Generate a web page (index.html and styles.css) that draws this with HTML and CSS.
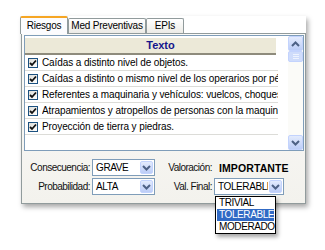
FILE: index.html
```html
<!DOCTYPE html>
<html>
<head>
<meta charset="utf-8">
<link rel="stylesheet" href="styles.css">
</head>
<body>
<div class="window">
  <div class="tabs">
    <div class="tab active">Riesgos</div>
    <div class="tab">Med Preventivas</div>
    <div class="tab">EPIs</div>
  </div>
  <div class="panel">
    <div class="list">
      <div class="grid">
        <div class="head">Texto</div>
        <div class="row"><span class="cb"><svg viewBox="0 0 8 8" width="8" height="8"><path d="M1 4 L3 6 L7 1.5" fill="none" stroke="#111" stroke-width="1.8"/></svg></span><span class="txt">Caídas a distinto nivel de objetos.</span></div>
        <div class="row"><span class="cb"><svg viewBox="0 0 8 8" width="8" height="8"><path d="M1 4 L3 6 L7 1.5" fill="none" stroke="#111" stroke-width="1.8"/></svg></span><span class="txt">Caídas a distinto o mismo nivel de los operarios por pérdida</span></div>
        <div class="row"><span class="cb"><svg viewBox="0 0 8 8" width="8" height="8"><path d="M1 4 L3 6 L7 1.5" fill="none" stroke="#111" stroke-width="1.8"/></svg></span><span class="txt">Referentes a maquinaria y vehículos: vuelcos, choques</span></div>
        <div class="row"><span class="cb"><svg viewBox="0 0 8 8" width="8" height="8"><path d="M1 4 L3 6 L7 1.5" fill="none" stroke="#111" stroke-width="1.8"/></svg></span><span class="txt">Atrapamientos y atropellos de personas con la maquinaria</span></div>
        <div class="row"><span class="cb"><svg viewBox="0 0 8 8" width="8" height="8"><path d="M1 4 L3 6 L7 1.5" fill="none" stroke="#111" stroke-width="1.8"/></svg></span><span class="txt">Proyección de tierra y piedras.</span></div>
      </div>
      <div class="sb">
        <div class="sbtn"><svg viewBox="0 0 9 6" width="9" height="6"><path d="M1 5 L4.5 1.5 L8 5" fill="none" stroke="#4d6185" stroke-width="2"/></svg></div>
        <div class="thumb"><i></i><i></i><i></i></div>
        <div class="track"></div>
        <div class="sbtn"><svg viewBox="0 0 9 6" width="9" height="6"><path d="M1 1 L4.5 4.5 L8 1" fill="none" stroke="#4d6185" stroke-width="2"/></svg></div>
      </div>
    </div>
    <div class="form">
      <span class="lbl">Consecuencia:</span>
      <div class="combo"><span class="cval">GRAVE</span><span class="arrow"><svg viewBox="0 0 9 6" width="9" height="6"><path d="M1 1 L4.5 4.5 L8 1" fill="none" stroke="#4d6185" stroke-width="2"/></svg></span></div>
      <span class="lbl">Valoración:</span>
      <span class="val">IMPORTANTE</span>
      <span class="lbl">Probabilidad:</span>
      <div class="combo"><span class="cval">ALTA</span><span class="arrow"><svg viewBox="0 0 9 6" width="9" height="6"><path d="M1 1 L4.5 4.5 L8 1" fill="none" stroke="#4d6185" stroke-width="2"/></svg></span></div>
      <span class="lbl">Val. Final:</span>
      <div class="combo final"><span class="cval">TOLERABLE</span><span class="arrow"><svg viewBox="0 0 9 6" width="9" height="6"><path d="M1 1 L4.5 4.5 L8 1" fill="none" stroke="#4d6185" stroke-width="2"/></svg></span>
        <div class="drop">
          <div class="opt">TRIVIAL</div>
          <div class="opt sel">TOLERABLE</div>
          <div class="opt">MODERADO</div>
        </div>
      </div>
    </div>
  </div>
</div>
</body>
</html>
```
FILE: styles.css
```css
html, body {
  margin: 0;
  padding: 0;
  background: #ffffff;
}
body {
  width: 325px;
  height: 250px;
  overflow: hidden;
  font-family: "Liberation Sans", Arial, sans-serif;
  font-size: 10px;
  color: #000;
}
.window {
  margin: 16px 0 0 21px;
  width: 285px;
  box-shadow: 2px 3px 5px rgba(0, 0, 0, 0.35);
}
.tabs {
  display: flex;
  align-items: flex-end;
  height: 17px;
  background: #fff;
}
.tab {
  box-sizing: border-box;
  height: 15px;
  border: 1px solid #919b9c;
  border-bottom: none;
  border-radius: 2px 2px 0 0;
  background: linear-gradient(#ffffff, #ecebe6);
  line-height: 13px;
  text-align: center;
  white-space: nowrap;
  letter-spacing: -0.2px;
}
.tab:nth-child(2) { width: 78px; }
.tab:nth-child(3) { width: 38px; }
.tab.active {
  position: relative;
  z-index: 1;
  width: 48px;
  height: 18px;
  margin-left: -1px;
  margin-bottom: -1px;
  border-top: 2px solid #f6a623;
  background: #fcfcfe;
  line-height: 15px;
}
.panel {
  box-sizing: border-box;
  height: 171px;
  border: 1px solid #919b9c;
  background: linear-gradient(#fbfbf9, #f3f2ed);
  padding: 1px 1px 0 2px;
}
.list {
  box-sizing: border-box;
  height: 116px;
  border: 1px solid #7f9db9;
  background: #fff;
  display: flex;
}
.grid {
  width: 253px;
  overflow: hidden;
}
.head {
  box-sizing: border-box;
  height: 17px;
  margin: 2px 2px 0 0;
  background: #ece9d8;
  border-bottom: 2px solid #8e8b7c;
  color: #14148c;
  font-weight: bold;
  font-size: 11px;
  line-height: 15px;
  text-align: center;
  padding-left: 20px;
}
.row {
  box-sizing: border-box;
  height: 16px;
  border-bottom: 1px solid #dcdcd8;
  display: flex;
  align-items: center;
  white-space: nowrap;
  overflow: hidden;
}
.cb {
  box-sizing: border-box;
  flex: none;
  width: 10px;
  height: 10px;
  margin: 0 4px 0 3px;
  border: 1px solid #1c5180;
  background: linear-gradient(135deg, #dcdcd7, #ffffff);
  display: flex;
  align-items: center;
  justify-content: center;
}
.txt {
  letter-spacing: -0.1px;
  overflow: hidden;
}
.sb {
  margin-left: 10px;
  width: 15px;
  display: flex;
  flex-direction: column;
  background: #fbfbf8;
}
.sbtn {
  box-sizing: border-box;
  height: 15px;
  border: 1px solid #c3d3fd;
  border-radius: 2px;
  background: linear-gradient(#e3ebfd, #bccdf7);
  display: flex;
  align-items: center;
  justify-content: center;
}
.thumb {
  box-sizing: border-box;
  height: 11px;
  border: 1px solid #c3d3fd;
  border-radius: 2px;
  background: #cfdcfb;
  display: flex;
  flex-direction: column;
  align-items: center;
  justify-content: center;
  gap: 1px;
}
.thumb i {
  display: block;
  width: 6px;
  height: 1px;
  background: #eef3fe;
}
.track {
  flex: 1;
}
.form {
  display: grid;
  grid-template-columns: 68px 63px 55px 70px;
  column-gap: 2px;
  row-gap: 2px;
  grid-auto-rows: 17px;
  align-items: center;
  margin-left: -2px;
  padding-top: 8px;
}
.lbl {
  text-align: right;
  letter-spacing: -0.5px;
  color: #111;
  white-space: nowrap;
}
.val {
  font-weight: bold;
  font-size: 10.5px;
  padding-left: 5px;
  letter-spacing: 0.1px;
  white-space: nowrap;
}
.combo {
  position: relative;
  box-sizing: border-box;
  height: 17px;
  border: 1px solid #7f9db9;
  background: #fff;
  display: flex;
  align-items: center;
}
.cval {
  flex: 1;
  overflow: hidden;
  white-space: nowrap;
  padding-left: 3px;
  letter-spacing: -0.4px;
}
.arrow {
  box-sizing: border-box;
  flex: none;
  width: 13px;
  height: 13px;
  margin: 0 1px 0 1px;
  border: 1px solid #c3d3fd;
  border-radius: 2px;
  background: linear-gradient(#e3ebfd, #bccdf7);
  display: flex;
  align-items: center;
  justify-content: center;
}
.drop {
  position: absolute;
  left: 0;
  top: 17px;
  width: 61px;
  box-sizing: border-box;
  border: 1px solid #000;
  background: #fff;
  padding: 0 1px;
  box-shadow: 2px 3px 4px rgba(0, 0, 0, 0.35);
  z-index: 2;
}
.opt {
  height: 12px;
  line-height: 12px;
  padding-left: 2px;
  letter-spacing: -0.4px;
  white-space: nowrap;
}
.opt.sel {
  background: #316ac5;
  color: #fff;
}
```
